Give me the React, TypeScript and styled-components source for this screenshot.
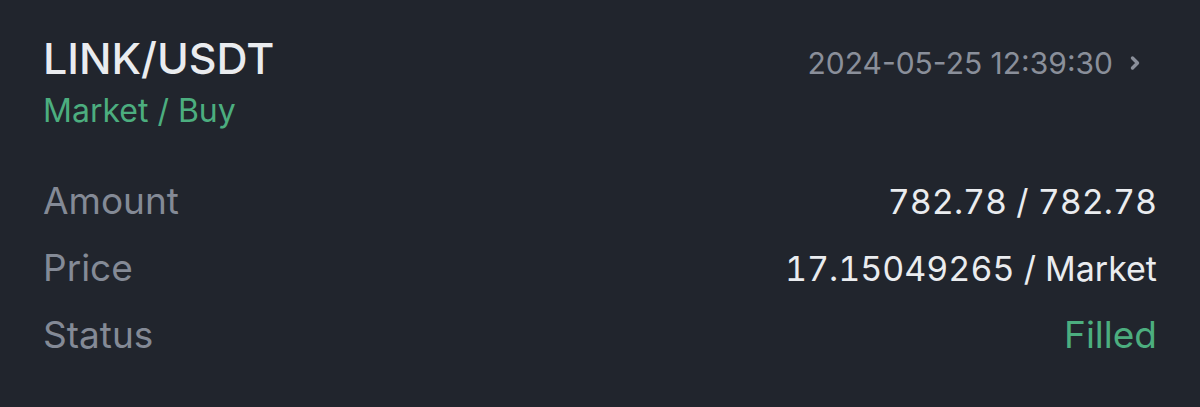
import React from 'react'
import styled, { createGlobalStyle } from 'styled-components'

const GlobalStyle = createGlobalStyle`
  html, body {
    margin: 0;
    padding: 0;
    background: #21252d;
  }
  body {
    font-family: 'Inter', 'Noto Sans', sans-serif;
  }
`

const Card = styled.div`
  width: 1200px;
  height: 407px;
  box-sizing: border-box;
  padding: 33px 43px 0 43px;
  background: #21252d;
`

const Header = styled.div`
  display: flex;
  justify-content: space-between;
  align-items: flex-start;
`

const TitleBlock = styled.div`
  display: flex;
  flex-direction: column;
`

const Pair = styled.div`
  font-size: 43px;
  font-weight: 500;
  line-height: 50px;
  color: #eaecef;
`

const OrderType = styled.div`
  font-size: 32px;
  line-height: 50px;
  margin-top: 3px;
  color: #4cae7f;
`

const TimeLink = styled.div`
  display: flex;
  align-items: center;
  gap: 16px;
  margin-top: 12px;
  margin-right: 16px;
  font-size: 30px;
  line-height: 36px;
  color: #8a8f9a;

  & > svg {
    stroke: #8a8f9a;
  }
`

const Rows = styled.div`
  display: flex;
  flex-direction: column;
  margin-top: 31px;
`

const Row = styled.div`
  display: flex;
  justify-content: space-between;
  align-items: baseline;
  height: 67px;
  line-height: 67px;
`

const Label = styled.span`
  font-size: 37px;
  color: #848a96;
`

const Value = styled.span<{ $tone?: 'green' }>`
  font-size: ${({ $tone }) => ($tone === 'green' ? '37px' : '34px')};
  font-feature-settings: 'tnum' 1;
  color: ${({ $tone }) => ($tone === 'green' ? '#4cae7f' : '#eaecef')};
`

interface Item {
  readonly label: string
  readonly value: string
  readonly tone?: 'green'
}

const items: Array<Item> = [
  { label: 'Amount', value: '782.78 / 782.78' },
  { label: 'Price', value: '17.15049265 / Market' },
  { label: 'Status', value: 'Filled', tone: 'green' },
]

const Chevron = () => (
  <svg width="12" height="18" viewBox="0 0 12 18" fill="none">
    <path d="M3.5 4l5 5-5 5" strokeWidth="3.4" strokeLinecap="round" strokeLinejoin="round" />
  </svg>
)

export default function App() {
  return (
    <>
      <GlobalStyle />
      <Card>
        <Header>
          <TitleBlock>
            <Pair>LINK/USDT</Pair>
            <OrderType>Market / Buy</OrderType>
          </TitleBlock>
          <TimeLink>
            2024-05-25 12:39:30
            <Chevron />
          </TimeLink>
        </Header>
        <Rows>
          {items.map((item) => (
            <Row key={item.label}>
              <Label>{item.label}</Label>
              <Value $tone={item.tone}>{item.value}</Value>
            </Row>
          ))}
        </Rows>
      </Card>
    </>
  )
}
